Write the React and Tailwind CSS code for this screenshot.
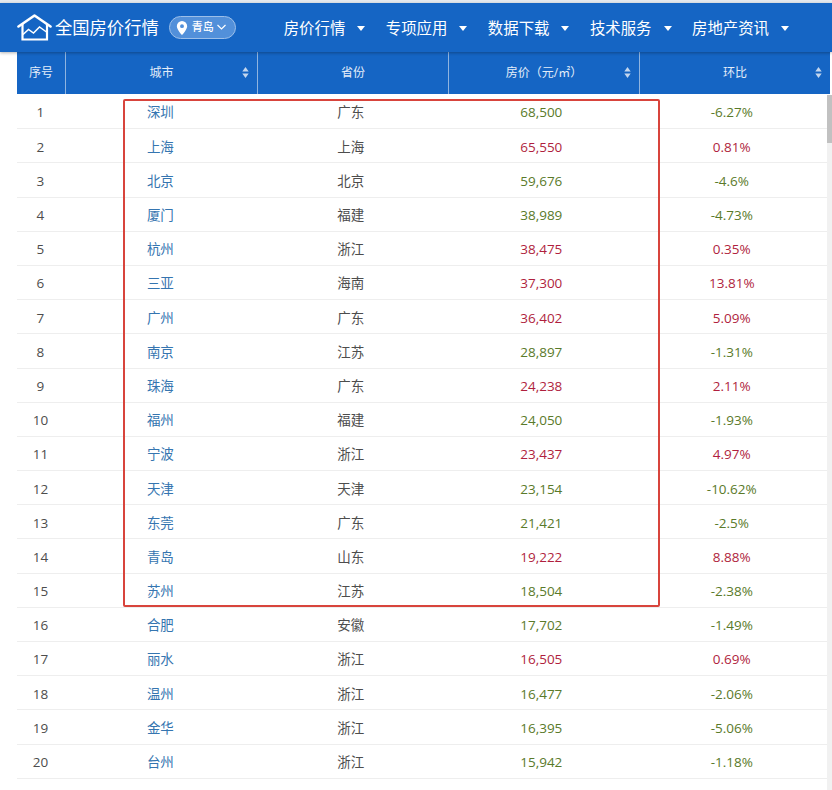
const rows = [
  ["深圳", "广东", "68,500", "-6.27%"],
  ["上海", "上海", "65,550", "0.81%"],
  ["北京", "北京", "59,676", "-4.6%"],
  ["厦门", "福建", "38,989", "-4.73%"],
  ["杭州", "浙江", "38,475", "0.35%"],
  ["三亚", "海南", "37,300", "13.81%"],
  ["广州", "广东", "36,402", "5.09%"],
  ["南京", "江苏", "28,897", "-1.31%"],
  ["珠海", "广东", "24,238", "2.11%"],
  ["福州", "福建", "24,050", "-1.93%"],
  ["宁波", "浙江", "23,437", "4.97%"],
  ["天津", "天津", "23,154", "-10.62%"],
  ["东莞", "广东", "21,421", "-2.5%"],
  ["青岛", "山东", "19,222", "8.88%"],
  ["苏州", "江苏", "18,504", "-2.38%"],
  ["合肥", "安徽", "17,702", "-1.49%"],
  ["丽水", "浙江", "16,505", "0.69%"],
  ["温州", "浙江", "16,477", "-2.06%"],
  ["金华", "浙江", "16,395", "-5.06%"],
  ["台州", "浙江", "15,942", "-1.18%"],
];

const navItems = ["房价行情", "专项应用", "数据下载", "技术服务", "房地产资讯"];

function SortIcon() {
  return (
    <svg className="absolute right-[8px] top-[15px] h-[11px] w-[7px]" viewBox="0 0 7 11" fill="#c3d6ee">
      <path d="M3.500 0l3.200 4.600H.3zM3.500 11L.3 6.400h6.400z" />
    </svg>
  );
}

function HeadCell({ width, sort, children }) {
  return (
    <div className={`${width} relative flex items-center justify-center border-r border-[#8fb4e0] last:border-r-0`}>
      {children}
      {sort && <SortIcon />}
    </div>
  );
}

export default function App() {
  return (
    <div
      className="relative h-[790px] w-[832px] overflow-hidden bg-white text-[13.5px]"
      style={{ fontFamily: '"Open Sans", "Noto Sans CJK SC", sans-serif' }}
    >
      <div className="h-[3px] bg-[#e4e9ee]" />

      {/* Nav */}
      <div className="relative z-10 flex h-[49px] items-center bg-[#1565c4] text-white shadow-[0_1px_3px_rgba(0,0,0,0.3)]">
        <svg className="ml-[17px] h-[27px] w-[35px]" viewBox="0 0 35 27" fill="none" stroke="white" strokeWidth="2.2">
          <path d="M1.500 12.500L17.500 1.500 33.500 12.500" strokeWidth="2.600" strokeLinecap="round" strokeLinejoin="round" />
          <path d="M5.500 10V25.500H30V10" />
          <path d="M6 20.500l5.500-5 5 3.500 6-6 7 5" strokeWidth="1.500" />
        </svg>
        <span className="ml-[3px] text-[17.3px]">全国房价行情</span>
        <div className="ml-[10px] flex h-[23px] w-[67px] items-center rounded-full border border-[#9cbfe9] bg-[#5290da] pl-[6px] text-[11px] font-medium">
          <svg className="h-[14px] w-[12px]" viewBox="0 0 11 13" fill="white">
            <path fillRule="evenodd" d="M5.500 0A4.800 4.800 0 0 0 .7 4.800C.7 8 5.500 13 5.500 13s4.800-5 4.800-8.200A4.800 4.800 0 0 0 5.500 0zm0 6.600a1.800 1.800 0 1 1 0-3.600 1.800 1.800 0 0 1 0 3.600z" />
          </svg>
          <span className="ml-[4px]">青岛</span>
          <svg className="ml-[2px] h-[7px] w-[11px]" viewBox="0 0 10 7" fill="none" stroke="white" strokeWidth="1.2">
            <path d="M1 1l4 4 4-4" />
          </svg>
        </div>
        <div className="ml-[48px] mt-[3px] flex items-center gap-[20.500px]">
          {navItems.map((item) => (
            <div key={item} className="flex items-center text-[15.4px]">
              <span>{item}</span>
              <span className="ml-[12px] h-0 w-0 border-x-[4.500px] border-t-[5px] border-x-transparent border-t-white" />
            </div>
          ))}
        </div>
      </div>

      {/* Table head */}
      <div className="ml-[17px] flex h-[42px] w-[813px] bg-[#1565c4] text-[12px] text-[#e3edf9]">
        <HeadCell width="w-[49px]">序号</HeadCell>
        <HeadCell width="w-[192px]" sort>城市</HeadCell>
        <HeadCell width="w-[191px]">省份</HeadCell>
        <HeadCell width="w-[191px]" sort>房价（元/㎡）</HeadCell>
        <HeadCell width="w-[190px]" sort>环比</HeadCell>
      </div>

      {/* Table body */}
      <div className="mt-[1px] flex pl-[17px]">
        <div className="w-[810px]">
          {rows.map((r, i) => {
            const color = r[3].startsWith("-") ? "text-[#5a7a2a]" : "text-[#b01f3e]";
            return (
              <div key={r[0]} className="flex h-[34.2px] items-center border-b border-[#eeeeee] pt-[2px] text-[#4d4d4d]">
                <div className="w-[47px] text-center">{i + 1}</div>
                <div className="w-[192px] pl-[83px] text-[#3575b0]">{r[0]}</div>
                <div className="w-[191px] text-center">{r[1]}</div>
                <div className={`w-[191px] text-center ${color}`}>{r[2]}</div>
                <div className={`w-[191px] text-center ${color}`}>{r[3]}</div>
              </div>
            );
          })}
        </div>
        <div className="h-[695px] w-[5px] bg-[#f1f1f1]">
          <div className="h-[48px] bg-[#c1c1c1]" />
        </div>
      </div>

      {/* Red highlight box */}
      <div className="absolute left-[123px] top-[99px] h-[508px] w-[537px] rounded-[2px] border-2 border-[#d8443c]" />
    </div>
  );
}
